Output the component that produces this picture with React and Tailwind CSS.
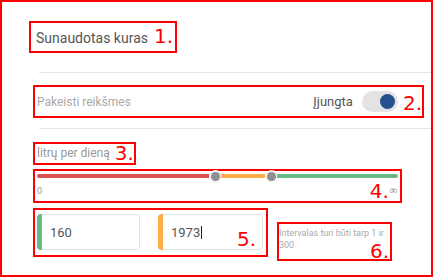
import React from "react";

const RED = "border-[#ff0000]";
const NUM = "font-['DejaVu_Sans',sans-serif] text-[20px] text-[#ff0000]";

function NumInput({ value, barColor, caret, width }) {
  return (
    <div className={`flex h-[36px] ${width} rounded-[4px] overflow-hidden`}>
      <div className={`w-[5px] ${barColor}`} />
      <div className="flex-1 flex items-center pl-[8px] border-y border-r border-[#e3e3e3] rounded-r-[4px] text-[13px] text-[#555]">
        <span className="leading-none">{value}</span>
        {caret && <span className="w-px h-[13px] bg-[#222] ml-[1px]" />}
      </div>
    </div>
  );
}

export default function App() {
  return (
    <div className="w-[433px] h-[277px] border-2 border-[#ff0000] bg-white flex flex-col pl-[27px] font-['Roboto',sans-serif]">
      {/* 1 */}
      <div className={`mt-[19px] w-[148px] h-[32px] border-2 ${RED} flex items-baseline pt-[3px] pl-[5px] whitespace-nowrap`}>
        <span className="text-[14px] leading-none text-[#555]">Sunaudotas kuras</span>
        <span className={`${NUM} leading-none ml-[6px]`}>1.</span>
      </div>

      <div className="mt-[19px] ml-[10px] h-px bg-[#e3e3e3]" />

      {/* 2 */}
      <div className={`mt-[12px] ml-[4px] w-[391px] h-[33px] border-2 ${RED} flex items-center justify-between pl-[2px] whitespace-nowrap`}>
        <span className="text-[12px] leading-none text-[#aaa]">Pakeisti reikšmes</span>
        <div className="flex items-center">
          <span className="text-[13px] leading-none text-[#555]">Įjungta</span>
          <div className="ml-[9px] w-[36px] h-[21px] rounded-full bg-[#e3e3e3] flex items-center justify-end pr-[3px]">
            <div className="w-[15px] h-[15px] rounded-full bg-[#27508e]" />
          </div>
          <span className={`${NUM} leading-none ml-[5px] mt-[3px]`}>2.</span>
        </div>
      </div>

      <div className="mt-[10px] ml-[10px] h-px bg-[#e3e3e3]" />

      {/* 3 */}
      <div className={`mt-[13px] ml-[4px] w-[103px] h-[23px] border-2 ${RED} flex items-start pt-[1px] pl-[2px] whitespace-nowrap`}>
        <span className="shrink-0 mt-[2px] text-[12px] leading-none text-[#999]">litrų per dieną</span>
        <span className={`${NUM} shrink-0 leading-[16px] ml-[5px]`}>3.</span>
      </div>

      {/* 4 */}
      <div className={`mt-[4px] ml-[4px] w-[369px] h-[34px] border-2 ${RED} flex flex-col pl-[2px] pr-[2px]`}>
        <div className="h-[10px] flex items-center">
          <div className="w-[172px] h-[4px] rounded-l-full bg-[#dc5050]" />
          <div className="w-[12px] flex justify-center">
            <div className="w-[9px] h-[9px] rounded-full bg-[#8f8f8f] shadow-[0_0_0_2px_#f4f4f4]" />
          </div>
          <div className="w-[44px] h-[4px] bg-[#ffad47]" />
          <div className="w-[12px] flex justify-center">
            <div className="w-[9px] h-[9px] rounded-full bg-[#8f8f8f] shadow-[0_0_0_2px_#f4f4f4]" />
          </div>
          <div className="flex-1 h-[4px] rounded-r-full bg-[#68b984]" />
        </div>
        <div className="mt-[2px] flex items-start justify-between">
          <span className="mt-[4px] text-[9px] leading-none text-[#999]">0</span>
          <div className="flex items-start">
            <span className={`${NUM} leading-[16px]`}>4.</span>
            <span className="mt-[2px] font-['DejaVu_Sans',sans-serif] text-[11px] leading-none text-[#999]">∞</span>
          </div>
        </div>
      </div>

      {/* 5 + 6 */}
      <div className="mt-[5px] ml-[4px] flex items-start">
        <div className={`relative w-[235px] h-[49px] border-2 ${RED} flex items-start gap-[18px] pt-[4px] pl-[2px]`}>
          <NumInput value="160" barColor="bg-[#68b984]" width="w-[103px]" />
          <NumInput value="1973" barColor="bg-[#ffad47]" width="w-[105px]" caret />
          <span className={`${NUM} leading-none absolute left-[202px] top-[19px]`}>5.</span>
        </div>
        <div className={`mt-[14px] ml-[9px] w-[115px] h-[39px] border-2 ${RED} pt-[3px] text-[9px] leading-[12px] text-[#aaa] whitespace-nowrap`}>
          <div>Intervalas turi būti tarp 1 ir</div>
          <div className="flex items-start justify-between pr-[1px]">
            <span>300</span>
            <span className={`${NUM} leading-none mt-[2px]`}>6.</span>
          </div>
        </div>
      </div>
    </div>
  );
}
